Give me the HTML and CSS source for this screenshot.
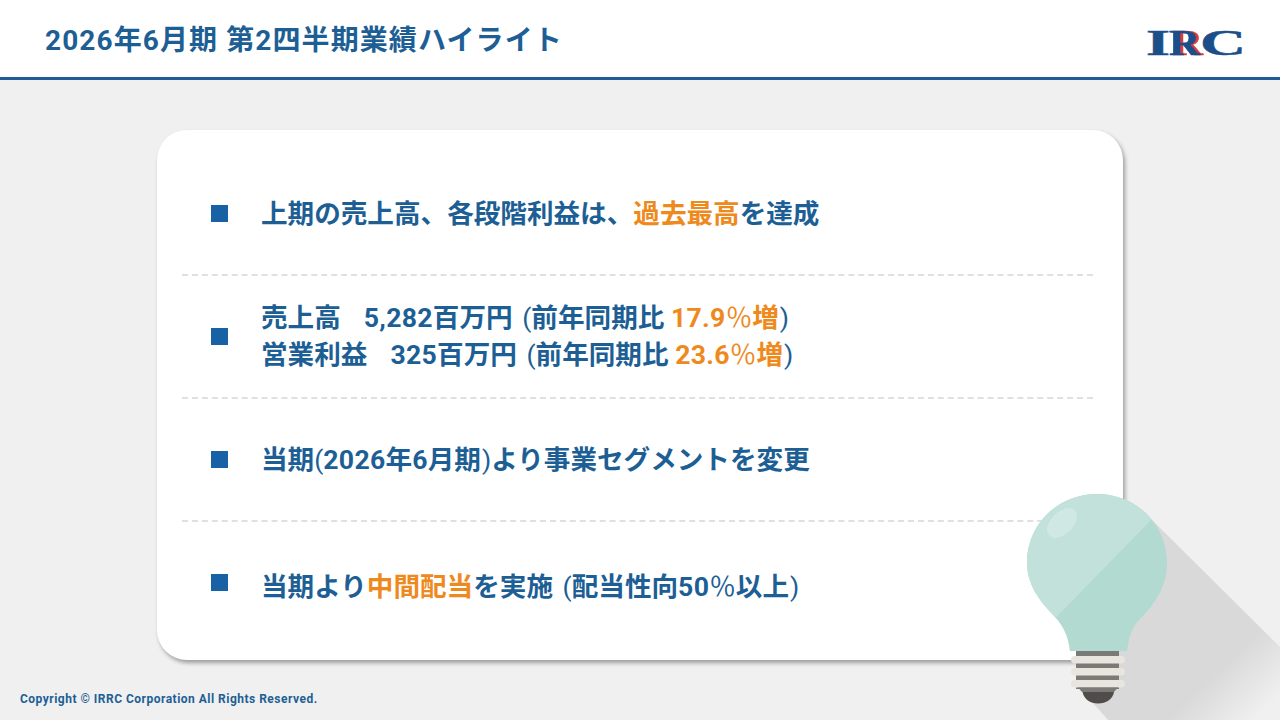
FILE: index.html
```html
<!DOCTYPE html>
<html lang="ja">
<head>
<meta charset="utf-8">
<title>第2四半期業績ハイライト</title>
<link rel="stylesheet" href="styles.css">
</head>
<body>
<div class="slide">
  <header class="header">
    <h1 class="title">2026年6月期 第2四半期業績ハイライト</h1>
    <svg class="logo" width="96" height="36" viewBox="0 0 96 36" role="img" aria-label="IRC">
      <text class="logo-i" x="-1" y="28" textLength="24" lengthAdjust="spacingAndGlyphs">I</text>
      <text class="logo-r" x="22" y="28" textLength="31" lengthAdjust="spacingAndGlyphs">R</text>
      <text class="logo-c" x="53" y="28" textLength="46" lengthAdjust="spacingAndGlyphs">C</text>
    </svg>
  </header>
  <main class="stage">
    <section class="card">
      <div class="row">
        <span class="bullet"></span>
        <p class="text">上期の売上高、各段階利益は、<em>過去最高</em>を達成</p>
      </div>
      <div class="row">
        <span class="bullet"></span>
        <p class="text">売上高<span class="gap"></span><span class="num">5,282</span>百万円 <span class="thin wide">(</span>前年同期比 <em><span class="num">17.9</span><span class="thin">％</span>増</em><span class="thin close">)</span><br>営業利益<span class="gap"></span><span class="num">325</span>百万円 <span class="thin wide">(</span>前年同期比 <em><span class="num">23.6</span><span class="thin">％</span>増</em><span class="thin close">)</span></p>
      </div>
      <div class="row">
        <span class="bullet"></span>
        <p class="text">当期<span class="thin">(</span><span class="num">2026</span>年<span class="num">6</span>月期<span class="thin close">)</span>より事業セグメントを変更</p>
      </div>
      <div class="row">
        <span class="bullet"></span>
        <p class="text text-low">当期より<em>中間配当</em>を実施 <span class="thin wide">(</span>配当性向<span class="num">50</span><span class="thin">％</span>以上<span class="thin close">)</span></p>
      </div>
    </section>
  </main>
  <footer class="footer">
    <span class="copy">Copyright © IRRC Corporation All Rights Reserved.</span>
    <span class="page">6</span>
  </footer>
  <svg class="bulb" width="1280" height="720" viewBox="0 0 1280 720" aria-hidden="true">
    <defs>
      <linearGradient id="fade" gradientUnits="userSpaceOnUse" x1="1160" y1="590" x2="1270" y2="705">
        <stop offset="0" stop-color="#d9d9d9"/>
        <stop offset="0.62" stop-color="#d9d9d9"/>
        <stop offset="1" stop-color="#f0f0f0"/>
      </linearGradient>
      <clipPath id="upper"><path d="M1020 480H1190L1000 675V480Z"/></clipPath>
    </defs>
    <path fill="url(#fade)" d="M1152 520L1280 647V720H1108L1093 703Z"/>
    <path fill="#b2dad1" d="M1055 617C1038 600 1027 583 1027 563C1027 524 1058 494 1097 494C1136 494 1167 524 1167 563C1167 586 1155 604 1140 619C1132 627 1129 636 1127 651H1070C1068 636 1064 627 1055 617Z"/>
    <path clip-path="url(#upper)" fill="#c3e1db" d="M1055 617C1038 600 1027 583 1027 563C1027 524 1058 494 1097 494C1136 494 1167 524 1167 563C1167 586 1155 604 1140 619C1132 627 1129 636 1127 651H1070C1068 636 1064 627 1055 617Z"/>
    <ellipse cx="1062" cy="523" rx="18" ry="11" fill="#cfe8e3" transform="rotate(-45 1062 523)"/>
    <rect x="1076" y="651" width="43" height="38" fill="#7b7a76"/>
    <rect x="1071" y="656" width="54" height="7.5" rx="3.7" fill="#e8e5de"/>
    <rect x="1071" y="668" width="54" height="7.5" rx="3.7" fill="#e8e5de"/>
    <rect x="1071" y="680" width="54" height="7.5" rx="3.7" fill="#e8e5de"/>
    <path fill="#7b7a76" d="M1078 687.500H1118L1114 692H1082Z"/>
    <path fill="#4f4c49" d="M1082.500 692H1114C1113 699 1106 703.500 1098 703.500C1090 703.500 1084 699 1082.500 692Z"/>
  </svg>
</div>
</body>
</html>
```
FILE: styles.css
```css
* { box-sizing: border-box; }
html, body { margin: 0; padding: 0; }
body { width: 1280px; height: 720px; overflow: hidden; background: #f0f0f0; }
.slide {
  position: relative;
  width: 1280px;
  height: 720px;
  display: flex;
  flex-direction: column;
  font-family: Roboto, "Noto Sans CJK JP", sans-serif;
  color: #1d5f95;
}
.header {
  height: 80px;
  flex: none;
  background: #fff;
  border-bottom: 3px solid #1d5f95;
  display: flex;
  align-items: center;
  justify-content: space-between;
  padding: 0 37px 0 45px;
}
.title { margin: 4px 0 0; font-size: 28px; font-weight: 700; line-height: 1.2; letter-spacing: 1.1px; }
.logo { display: block; margin-top: 13px; overflow: visible; }
.logo text { font-family: "Liberation Serif", serif; font-weight: 700; font-size: 36px; stroke-width: .5px; }
.logo-i, .logo-c { fill: #1c4f8a; stroke: #1c4f8a; }
.logo-r { fill: #1c4f8a; stroke: #1c4f8a; filter: drop-shadow(3px 0 0 #d23b40); }
.stage { flex: 1; padding: 50px 157px 0; }
.card {
  width: 966px;
  height: 530px;
  background: #fff;
  border-radius: 30px;
  padding: 23px 30px 17px 25px;
  box-shadow: 2px 3px 4px rgba(0,0,0,.35);
  display: flex;
  flex-direction: column;
}
.row {
  flex: 1;
  display: flex;
  align-items: center;
  gap: 33px;
  padding-left: 29px;
  border-bottom: 2px dashed #e0e0e0;
}
.row:last-child { border-bottom: 0; }
.bullet { width: 17px; height: 17px; background: #1861a4; flex: none; }
.text { margin: 0 0 1px; font-size: 26.6px; font-weight: 700; line-height: 37px; }
.text-low { padding-top: 8px; }
.text em { font-style: normal; color: #ee8a1d; }
.thin { font-weight: 400; }
.wide { margin-left: 3px; }
.close { margin-left: 1px; }
.num { letter-spacing: .3px; }
.gap { display: inline-block; width: 23px; }
.footer {
  flex: none;
  height: 40px;
  display: flex;
  align-items: center;
  justify-content: space-between;
  padding: 0 12px 2px 20px;
}
.copy { font-size: 12px; font-weight: 700; letter-spacing: .49px; }
.page { font-size: 15px; font-weight: 700; }
.bulb { position: absolute; left: 0; top: 0; pointer-events: none; }
```
